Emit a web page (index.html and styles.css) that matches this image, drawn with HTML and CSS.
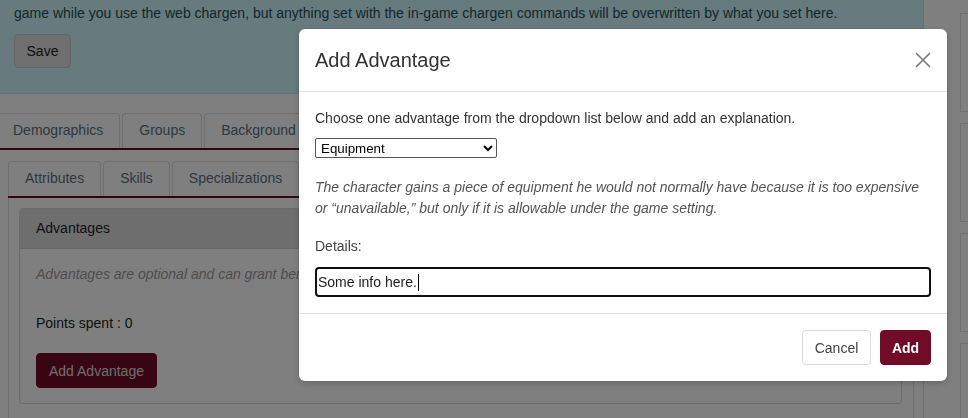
FILE: index.html
```html
<!DOCTYPE html>
<html lang="en">
<head>
<meta charset="utf-8">
<title>Add Advantage</title>
<link rel="stylesheet" href="styles.css">
</head>
<body>
<div class="page">
  <div class="main">
    <div class="alert">
      <p class="alert-text">Your character's settings are saved to the game as you go. You can still log in and look around the<br>game while you use the web chargen, but anything set with the in-game chargen commands will be overwritten by what you set here.</p>
      <button class="btn btn-save" type="button">Save</button>
    </div>
    <div class="outer">
      <ul class="tabs outer-tabs">
        <li class="tab tab-first">Demographics</li>
        <li class="tab">Groups</li>
        <li class="tab">Background</li>
        <li class="tab">Appearance</li>
        <li class="tab">Personality</li>
      </ul>
      <div class="outer-pane">
        <ul class="tabs inner-tabs">
          <li class="tab">Attributes</li>
          <li class="tab">Skills</li>
          <li class="tab">Specializations</li>
          <li class="tab">Advantages</li>
        </ul>
        <div class="inner-pane">
          <div class="card">
            <div class="card-header">Advantages</div>
            <div class="card-body">
              <p class="muted">Advantages are optional and can grant benefits to your character. Each one costs points.</p>
              <p class="points">Points spent : 0</p>
              <button class="btn btn-primary btn-add-adv" type="button">Add Advantage</button>
            </div>
          </div>
        </div>
      </div>
    </div>
  </div>
  <div class="side">
    <div class="side-panel"></div>
    <div class="side-panel"></div>
    <div class="side-panel"></div>
    <div class="side-panel"></div>
  </div>
</div>

<div class="backdrop"></div>

<div class="modal">
  <div class="modal-header">
    <h2 class="modal-title">Add Advantage</h2>
    <button class="close" type="button" aria-label="Close">
      <svg width="16" height="16" viewBox="0 0 16 16"><path d="M1 1 L15 15 M15 1 L1 15" stroke="#7a7a7a" stroke-width="1.6" fill="none"/></svg>
    </button>
  </div>
  <div class="modal-body">
    <p class="intro">Choose one advantage from the dropdown list below and add an explanation.</p>
    <select class="adv-select">
      <option>Equipment</option>
      <option>Ally</option>
      <option>Contacts</option>
    </select>
    <p class="desc">The character gains a piece of equipment he would not normally have because it is too expensive or “unavailable,” but only if it is allowable under the game setting.</p>
    <label class="details-label">Details:</label>
    <div class="details-input">Some info here.<span class="caret"></span></div>
  </div>
  <div class="modal-footer">
    <button class="btn btn-cancel" type="button">Cancel</button>
    <button class="btn btn-primary btn-modal-add" type="button">Add</button>
  </div>
</div>
</body>
</html>
```

FILE: styles.css
```css
* { box-sizing: border-box; }

html, body {
  margin: 0;
  padding: 0;
  width: 968px;
  height: 418px;
  overflow: hidden;
  background: #ffffff;
  font-family: "Liberation Sans", Arial, sans-serif;
  font-size: 14px;
  color: #333;
}

.page {
  display: flex;
  align-items: flex-start;
}

.main {
  width: 924px;
  flex: none;
}

.alert {
  margin-top: -30px;
  background: #cff4fc;
  border-bottom: 1px solid #b6effb;
  border-right: 1px solid #b6effb;
  padding: 12px 14px 25px 14px;
  color: #244e58;
}

.alert-text {
  margin: 0;
  line-height: 21px;
  white-space: nowrap;
}

.btn {
  font-family: "Liberation Sans", Arial, sans-serif;
  font-size: 14px;
  border-radius: 4px;
  cursor: pointer;
}

.btn-save {
  margin-top: 10px;
  height: 34px;
  width: 57px;
  padding: 0;
  background: #dedede;
  border: 1px solid #c8c8c8;
  color: #222;
}

.outer {
  margin-top: 19px;
}

.tabs {
  list-style: none;
  margin: 0;
  padding: 0;
  display: flex;
  gap: 2px;
  border-bottom: 2px solid #6f0b24;
}

.tab {
  height: 35px;
  line-height: 33px;
  padding: 0 16px;
  border: 1px solid #dedede;
  border-bottom: none;
  border-radius: 4px 4px 0 0;
  color: #5b7079;
  white-space: nowrap;
}

.outer-tabs {
  margin-left: -4px;
}

.outer-pane {
  border-right: 1px solid #dedede;
  padding: 11px 9px 0 8px;
  height: 300px;
}

.inner-pane {
  border-left: 1px solid #dedede;
  border-right: 1px solid #dedede;
  padding: 10px 11px 0 10px;
  height: 260px;
}

.card {
  border: 1px solid #d6d6d6;
  border-radius: 4px;
  overflow: hidden;
}

.card-header {
  height: 40px;
  line-height: 39px;
  padding: 0 16px;
  background: #dcdcdc;
  border-bottom: 1px solid #d0d0d0;
  color: #222;
}

.card-body {
  padding: 15px 16px 15px 16px;
}

.muted {
  margin: 0;
  line-height: 21px;
  font-style: italic;
  color: #9a9a9a;
  white-space: nowrap;
}

.points {
  margin: 28px 0 0 0;
  line-height: 21px;
  color: #222;
}

.btn-primary {
  background: #700c25;
  border: 1px solid #700c25;
  color: #fff;
}

.btn-add-adv {
  margin-top: 19px;
  height: 35px;
  width: 121px;
  padding: 0;
  font-size: 14px;
  color: #ddd;
}

.side {
  flex: 1;
  padding: 13px 0 0 36px;
  display: flex;
  flex-direction: column;
  gap: 11px;
}

.side-panel {
  height: 99px;
  border: 1px solid #dedede;
  border-right: none;
}

.backdrop {
  position: fixed;
  inset: 0;
  background: rgba(0, 0, 0, 0.5);
}

.modal {
  position: fixed;
  left: 299px;
  top: 29px;
  width: 648px;
  background: #fff;
  border-radius: 6px;
  box-shadow: 0 2px 6px rgba(0, 0, 0, 0.2);
  color: #444;
}

.modal-header {
  display: flex;
  align-items: center;
  justify-content: space-between;
  padding: 16px 16px 16px 16px;
  height: 63px;
  border-bottom: 1px solid #dee2e6;
}

.modal-title {
  margin: 0;
  font-size: 20px;
  font-weight: 400;
  line-height: 30px;
  color: #333;
}

.close {
  background: none;
  border: none;
  padding: 0;
  width: 16px;
  height: 16px;
  margin-right: 0;
  display: flex;
}

.modal-body {
  padding: 16px 16px 16px 16px;
  display: flex;
  flex-direction: column;
  align-items: flex-start;
}

.intro {
  margin: 0;
  line-height: 21px;
  color: #333;
}

.adv-select {
  margin-top: 9px;
  width: 182px;
  height: 20px;
  font-family: "Liberation Sans", Arial, sans-serif;
  font-size: 13.33px;
  color: #000;
  border: 1px solid #555;
  border-radius: 2px;
  background: #fff;
  padding: 0 0 0 1px;
}

.desc {
  margin: 19px 0 0 0;
  line-height: 21px;
  font-style: italic;
  color: #555;
}

.details-label {
  margin-top: 17px;
  line-height: 21px;
  color: #444;
}

.details-input {
  margin-top: 10px;
  width: 100%;
  height: 30px;
  border: 2px solid #111;
  border-radius: 4px;
  padding: 0 1px;
  line-height: 26px;
  color: #222;
  display: flex;
  align-items: center;
}

.caret {
  display: inline-block;
  width: 1px;
  height: 17px;
  background: #000;
  margin-left: 1px;
}

.modal-footer {
  border-top: 1px solid #dee2e6;
  padding: 16px;
  display: flex;
  justify-content: flex-end;
  gap: 9px;
}

.btn-cancel {
  height: 35px;
  width: 69px;
  padding: 0;
  background: #fff;
  border: 1px solid #dcdcdc;
  color: #444;
}

.btn-modal-add {
  height: 35px;
  width: 51px;
  padding: 0;
  font-weight: 700;
}
```
